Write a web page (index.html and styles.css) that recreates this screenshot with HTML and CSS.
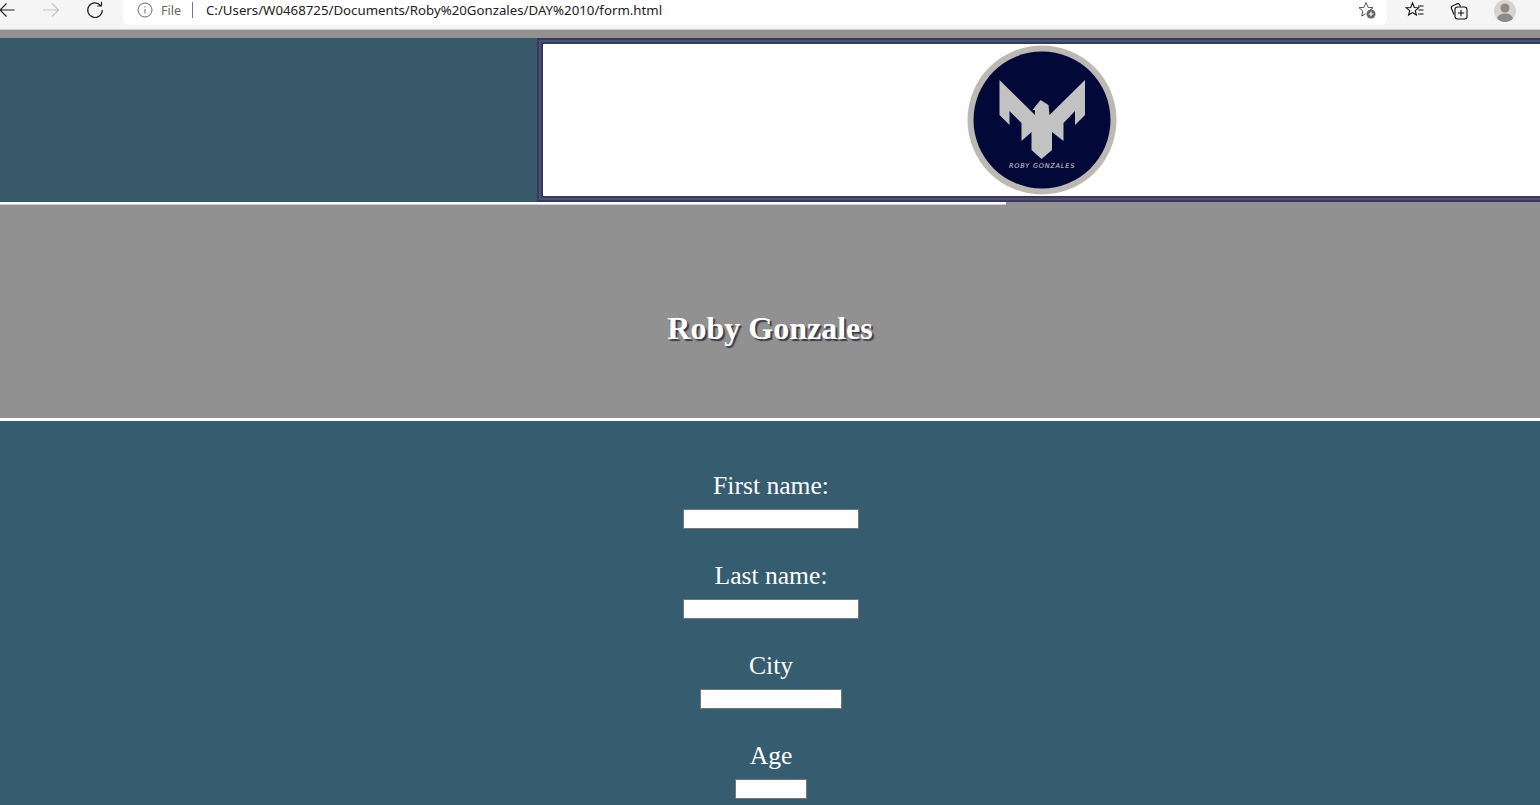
FILE: index.html
```html
<!DOCTYPE html>
<html lang="en">
<head>
  <meta charset="UTF-8">
  <title>form</title>
  <link rel="stylesheet" href="styles.css">
</head>
<body>
  <!-- browser toolbar -->
  <div class="toolbar">
    <div class="nav">
      <svg class="nav-icon back" width="18" height="18" viewBox="0 0 18 18"><path d="M15.5 9H1M7.5 2.5 1 9l6.5 6.5"/></svg>
      <svg class="nav-icon forward" width="18" height="18" viewBox="0 0 18 18"><path d="M1 9h15M10 2.5 16.5 9 10 15.5"/></svg>
      <svg class="nav-icon reload" width="18" height="18" viewBox="0 0 18 18"><path d="M14.7 4.6A7.3 7.3 0 1 0 16.3 9M15.5 .8V5h-4.2"/></svg>
    </div>
    <div class="address">
      <svg class="info-icon" width="16" height="16" viewBox="0 0 16 16"><circle cx="8" cy="8" r="7"/><path d="M8 7v4.5M8 4.2v1.3"/></svg>
      <span class="scheme">File</span>
      <span class="sep"></span>
      <span class="url">C:/Users/W0468725/Documents/Roby%20Gonzales/DAY%2010/form.html</span>
      <svg class="fav-add" width="20" height="20" viewBox="0 0 20 20">
        <path d="M9 2.5 11 7.300l5 .4-3.800 3.300 1.100 3.900M9 2.500 7 7.300l-5 .4 3.800 3.300L4.700 16 8.500 13.800"/>
        <circle class="fav-dot" cx="14" cy="14" r="4.5"/>
        <path class="fav-plus" d="M14 11.800v4.400M11.800 14h4.400"/>
      </svg>
    </div>
    <div class="tools">
      <svg class="tool" width="20" height="20" viewBox="0 0 20 20"><path d="M7.5 2 9.300 6.500l4.400.3-3.400 2.900 1.100 4.300-3.900-2.400-3.900 2.400 1.100-4.300L1.300 6.800l4.400-.3zM13 5h5.500M13.500 9h5M13 13h5.500"/></svg>
      <svg class="tool" width="20" height="20" viewBox="0 0 20 20"><path d="M5 13.500 2.500 7.500a2 2 0 0 1 1-2.600L8 2.800a2 2 0 0 1 2.500 .8l1 1.900"/><rect x="6" y="6" width="12" height="12" rx="2.5"/><path d="M12 8.800v6.400M8.800 12h6.400"/></svg>
      <svg class="avatar" width="22" height="22" viewBox="0 0 22 22"><circle class="avatar-bg" cx="11" cy="11" r="11"/><circle class="avatar-fg" cx="11" cy="8" r="4.5"/><path class="avatar-fg" d="M3 18.500C4.500 14.500 7.500 13.500 11 13.500s6.500 1 8 5A11 11 0 0 1 3 18.500z"/></svg>
    </div>
  </div>
  <div class="strip"></div>

  <header class="top">
    <div class="logo-box">
      <div class="logo-inner">
        <svg class="logo" width="150" height="150" viewBox="0 0 150 150">
          <circle class="logo-ring" cx="75" cy="75" r="74.5"/>
          <circle class="logo-disc" cx="75" cy="75" r="68.5"/>
          <polygon class="logo-bird" points="32.500,35 68,70 68,65 65.500,65 73.500,55 81.500,60 82.500,70 118,35 118,70 108,80 108,66 96.500,78 96.500,96 85,87 85,105 74.500,114 64.500,105 64.500,87 54.500,96 54.500,78 42.500,66 42.500,80 32.500,70"/>
          <text class="logo-text" x="75" y="123">ROBY GONZALES</text>
        </svg>
      </div>
    </div>
  </header>
  <div class="rule-wrap"><hr class="rule rule-short"></div>

  <section class="title">
    <h1>Roby Gonzales</h1>
  </section>
  <hr class="rule">

  <form class="form">
    <div class="row">
      <label for="first">First name:</label>
      <input class="wide" id="first" type="text">
    </div>
    <div class="row">
      <label for="last">Last name:</label>
      <input class="wide" id="last" type="text">
    </div>
    <div class="row">
      <label for="city">City</label>
      <input class="mid" id="city" type="text">
    </div>
    <div class="row">
      <label for="age">Age</label>
      <input class="small" id="age" type="text">
    </div>
  </form>
</body>
</html>
```

FILE: styles.css
```css
html, body {
  margin: 0;
  padding: 0;
  height: 805px;
  overflow: hidden;
  font-family: 'Liberation Serif', serif;
  background: #355c6f;
}

/* browser toolbar */
.toolbar {
  display: flex;
  height: 29px;
  background: #f5f5f5;
  border-bottom: 1px solid #cfcfcf;
  font-family: 'Noto Sans', sans-serif;
}
.nav {
  display: flex;
  width: 123px;
  flex-shrink: 0;
}
.nav-icon {
  fill: none;
  stroke: #222;
  stroke-width: 1.2;
  margin-top: 1px;
}
.back { margin-left: -1px; }
.forward { margin-left: 25px; stroke: #c4c4c4; }
.reload { margin-left: 26px; }
.address {
  display: flex;
  align-items: center;
  width: 1264px;
  height: 20px;
  padding-bottom: 5px;
  flex-shrink: 0;
  background: #fff;
  border-radius: 0 0 6px 6px;
  font-size: 13.25px;
}
.info-icon {
  fill: none;
  stroke: #6a6a6a;
  stroke-width: 1;
  margin-left: 14px;
}
.scheme { margin-left: 8px; font-size: 12.5px; color: #666; }
.sep { width: 1px; height: 16px; background: #777; margin: 0 13px 0 11px; }
.url { color: #222; flex: 1; }
.fav-add {
  fill: none;
  stroke: #555;
  stroke-width: 1;
  margin-right: 10px;
}
.fav-dot { fill: #666; stroke: none; }
.fav-plus { stroke: #fff; stroke-width: 1.2; }
.tools {
  display: flex;
  align-items: center;
  gap: 24px;
  padding: 0 0 8px 18px;
}
.tool {
  fill: none;
  stroke: #111;
  stroke-width: 1.1;
}
.avatar { margin-left: 1px; }
.avatar-bg { fill: #d5d2cf; }
.avatar-fg { fill: #8d8a88; }

.strip {
  height: 8px;
  background: #919191;
}

/* header with logo */
.top {
  display: flex;
  justify-content: flex-end;
  height: 164px;
  background: #38596a;
}
.logo-box {
  width: 1003px;
  box-sizing: border-box;
  border: 2px solid #40355f;
  border-right: none;
  padding: 2px 0 2px 2px;
  background: #3a5a70;
}
.logo-inner {
  display: flex;
  justify-content: center;
  align-items: center;
  height: 100%;
  box-sizing: border-box;
  background: #fff;
  border: 2px solid #40355f;
  border-right: none;
}
.logo-ring { fill: #bcb9b4; }
.logo-disc { fill: #020838; }
.logo-bird { fill: #c2c2c2; }
.logo-text {
  fill: #d8d8d8;
  font-family: 'DejaVu Sans', sans-serif;
  font-size: 6.5px;
  font-style: italic;
  letter-spacing: 0.8px;
  text-anchor: middle;
}

.rule {
  display: block;
  height: 3px;
  margin: 0;
  border: none;
  background: #fff;
}
.rule-wrap {
  background: #919191;
}
.rule-short {
  width: 1006px;
  height: 2px;
  border-bottom: 1px solid #cfcfcf;
}

.title {
  padding: 105px 0 71px;
  background: #919191;
}
.title h1 {
  margin: 0;
  font-size: 32px;
  line-height: 37px;
  text-align: center;
  color: #fff;
  text-shadow: 2px 2px 1px #3a3a4a;
}

.form {
  padding: 50px 0 0 2px;
}
.row {
  display: flex;
  flex-direction: column;
  align-items: center;
  height: 90px;
}
.row label {
  font-size: 25.6px;
  line-height: 30px;
  color: #fff;
  margin-bottom: 8px;
}
.row input {
  height: 20px;
  padding: 0;
  box-sizing: border-box;
  background: #fff;
  border: 1px solid #767676;
}
.wide { width: 176px; }
.mid { width: 142px; }
.small { width: 72px; }
```
